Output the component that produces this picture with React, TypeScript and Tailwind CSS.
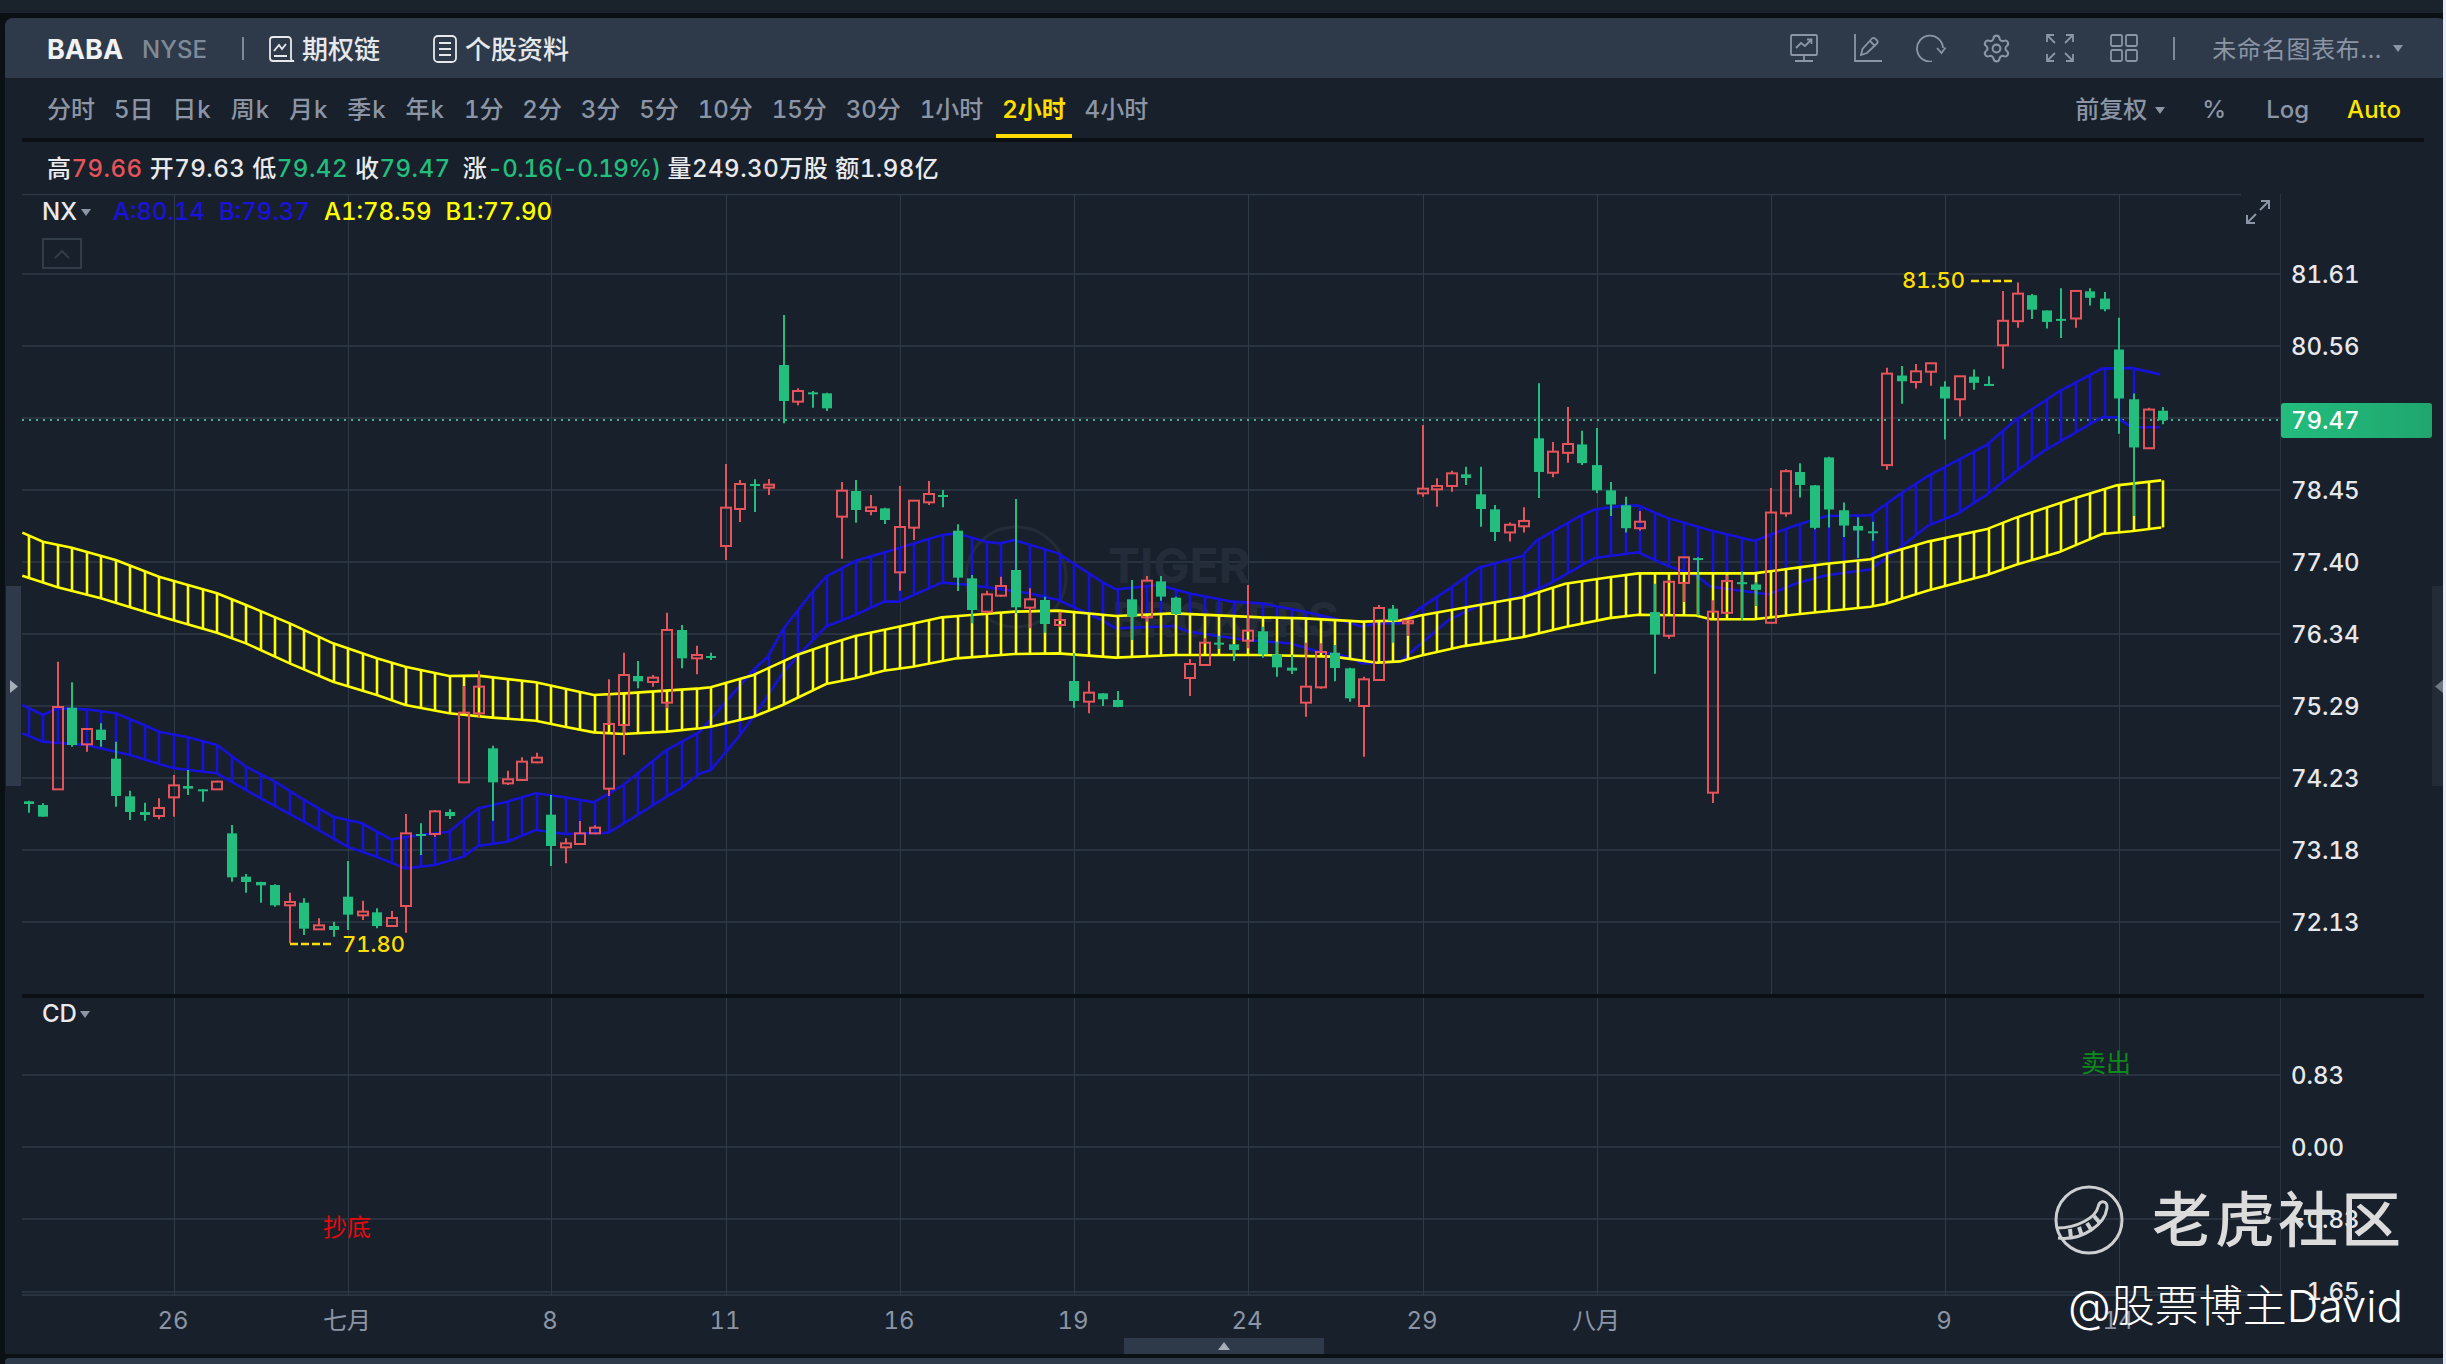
import React from "react";
import { Settings } from "lucide-react";

const RED = "#e5545a";
const GREEN = "#23bd7e";
const BLUE = "#1712d8";
const YELLOW = "#ffff00";
const GRID = "#2f3a47";

const R = 1;
const G = 0;
type Row = number[];

// candle rows: colour, high, body top, body bottom, low (read off the chart, per section)
const sectionA: Row[] = [
  [G, 962, 964, 972, 998], [G, 970, 975, 1010, 1010], [R, 545, 681, 928, 928], [G, 607, 683, 795, 800],
  [R, 745, 747, 793, 815], [G, 730, 749, 780, 800], [G, 785, 836, 948, 980], [G, 932, 949, 996, 1020],
  [G, 968, 996, 1005, 1022], [R, 955, 984, 1008, 1018], [R, 885, 916, 952, 1010], [G, 870, 918, 926, 945],
  [G, 928, 928, 933, 965], [R, 902, 905, 928, 930], [G, 1035, 1060, 1192, 1205], [G, 1182, 1190, 1206, 1238],
  [G, 1205, 1206, 1216, 1268], [G, 1213, 1215, 1276, 1280], [R, 1238, 1266, 1276, 1390], [G, 1255, 1268, 1346, 1365],
  [R, 1315, 1336, 1348, 1350], [G, 1325, 1338, 1350, 1370], [G, 1143, 1250, 1304, 1350], [R, 1262, 1295, 1306, 1320],
  [G, 1285, 1297, 1338, 1345], [R, 1293, 1314, 1338, 1340], [R, 1002, 1060, 1278, 1358], [G, 1030, 1062, 1068, 1125],
  [R, 990, 994, 1062, 1070], [G, 988, 996, 1008, 1017], [R, 618, 698, 907, 907], [R, 572, 620, 700, 712],
  [G, 797, 805, 907, 1022], [R, 872, 898, 910, 915], [R, 832, 845, 900, 902], [R, 818, 833, 847, 850],
  [G, 945, 1004, 1098, 1158], [R, 1075, 1090, 1102, 1150], [R, 1023, 1060, 1092, 1095], [R, 1036, 1043, 1060, 1063],
  [R, 598, 732, 926, 948], [R, 518, 585, 735, 825], [G, 543, 588, 604, 625], [R, 585, 593, 606, 620],
  [R, 398, 450, 668, 685], [G, 435, 450, 535, 565], [R, 497, 525, 535, 583],
];

const sectionB: Row[] = [
  [G, 1118, 1128, 1132, 1140], [R, 552, 683, 798, 840], [R, 600, 612, 687, 726], [G, 598, 612, 618, 696],
  [R, 597, 614, 623, 645], [G, 105, 255, 363, 430], [R, 325, 333, 365, 376], [G, 333, 337, 340, 383],
  [G, 338, 340, 385, 393], [R, 606, 632, 710, 836], [G, 600, 633, 690, 728], [R, 645, 682, 693, 706],
  [G, 683, 685, 720, 732], [R, 618, 741, 877, 932], [R, 660, 662, 743, 780], [R, 603, 642, 667, 675],
  [G, 630, 645, 650, 682], [G, 733, 752, 893, 933], [G, 885, 895, 990, 1030], [R, 932, 943, 995, 1000],
  [R, 890, 918, 947, 950], [G, 657, 870, 982, 1000], [R, 925, 958, 983, 1045], [G, 950, 960, 1032, 1058],
  [R, 995, 1020, 1035, 1042], [G, 1120, 1203, 1263, 1283], [R, 1204, 1238, 1265, 1300], [G, 1240, 1240, 1258, 1278],
  [G, 1233, 1260, 1281, 1282], [G, 900, 958, 1010, 1080], [R, 888, 902, 1012, 1025], [G, 888, 904, 950, 962],
  [G, 950, 953, 1002, 1005], [R, 1137, 1152, 1194, 1248], [R, 1075, 1088, 1155, 1158], [G, 1067, 1088, 1094, 1107],
  [G, 1092, 1093, 1110, 1143], [R, 915, 1052, 1082, 1105], [G, 1040, 1054, 1123, 1133], [G, 1085, 1123, 1162, 1190],
  [G, 1125, 1163, 1172, 1182], [R, 1088, 1220, 1268, 1310], [R, 1090, 1116, 1222, 1226], [G, 1095, 1118, 1164, 1204],
  [G, 1163, 1165, 1255, 1265], [R, 1190, 1198, 1278, 1430], [R, 975, 984, 1200, 1202], [G, 975, 986, 1022, 1088],
  [R, 1020, 1022, 1030, 1068], [R, 435, 626, 640, 650], [R, 595, 618, 628, 680], [R, 572, 580, 618, 635],
  [G, 560, 583, 594, 615], [G, 560, 643, 687, 740], [G, 675, 688, 756, 783],
];

const sectionC: Row[] = [
  [R, 712, 718, 738, 762], [R, 672, 708, 722, 738], [G, 348, 492, 580, 648], [R, 502, 527, 582, 594],
  [R, 410, 507, 530, 556], [G, 472, 508, 557, 562], [G, 465, 562, 628, 635], [G, 606, 628, 665, 695],
  [G, 645, 667, 727, 738], [R, 682, 710, 727, 733], [G, 872, 946, 1005, 1107], [R, 862, 867, 1008, 1016],
  [R, 803, 803, 870, 920], [G, 803, 805, 809, 955], [R, 915, 945, 1418, 1445], [R, 850, 865, 948, 952],
  [G, 840, 868, 873, 968], [G, 868, 874, 888, 930], [R, 622, 686, 974, 976], [R, 573, 578, 688, 697],
  [G, 557, 580, 614, 647], [G, 614, 615, 726, 730], [G, 540, 542, 678, 725], [G, 660, 680, 720, 750],
  [G, 698, 721, 733, 805], [G, 710, 735, 738, 760], [R, 308, 323, 562, 574], [G, 303, 328, 343, 402],
  [R, 298, 317, 345, 362], [R, 295, 296, 318, 355], [G, 343, 357, 388, 495], [R, 330, 330, 390, 435],
  [G, 312, 331, 347, 365], [G, 330, 350, 352, 355], [R, 107, 185, 249, 310], [R, 85, 114, 186, 203],
  [G, 115, 118, 156, 180], [G, 158, 158, 188, 205], [G, 100, 180, 182, 230], [R, 107, 107, 179, 203],
  [G, 100, 108, 125, 145], [G, 110, 127, 155, 160], [G, 177, 260, 388, 480], [G, 375, 390, 516, 695],
  [R, 412, 417, 518, 520], [G, 410, 420, 445, 455],
];

const toY = (rows: Row[], base: number, k: number) =>
  rows.map(([c, ...v]) => [c, ...v.map((n) => base + n / k)]);

const candles = [...toY(sectionA, 480, 3), ...toY(sectionB, 280, 3), ...toY(sectionC, 250, 2.613)];

const slotX = (i: number) => Math.round(28.6 + 14.52 * i);

type Pt = number[];
const makeCurve = (a: Pt[], b: Pt[], c: Pt[]) => [
  ...a.map(([x, y]) => [x / 2.24, 480 + y / 3]),
  ...b.map(([x, y]) => [700 + x / 1.96, 280 + y / 3]).filter((p) => p[0] > 700 && p[0] < 1400),
  ...c.map(([x, y]) => [1400 + x / 1.96, 250 + y / 2.613]),
];

const yellowTop = makeCurve(
  [[50, 158], [96, 185], [161, 203], [259, 240], [356, 290], [486, 340], [551, 375], [649, 430], [746, 490], [844, 535], [908, 560], [1006, 588], [1071, 587], [1200, 607], [1330, 645], [1400, 640], [1568, 625]],
  [[21, 1222], [105, 1185], [133, 1165], [190, 1125], [247, 1095], [304, 1068], [389, 1040], [474, 1012], [531, 1005], [616, 995], [702, 992], [815, 1008], [929, 1000], [1100, 1012], [1185, 1015], [1298, 1025]],
  [[0, 968], [40, 955], [125, 935], [239, 908], [324, 872], [410, 855], [467, 845], [580, 845], [694, 845], [779, 830], [836, 820], [922, 808], [950, 795], [1035, 762], [1149, 730], [1206, 700], [1319, 650], [1405, 615], [1492, 602]]
);

const yellowBottom = makeCurve(
  [[50, 287], [129, 322], [226, 355], [356, 408], [486, 458], [551, 490], [649, 550], [746, 605], [844, 645], [908, 675], [1006, 700], [1103, 713], [1200, 722], [1265, 740], [1330, 757], [1396, 762], [1493, 755], [1568, 745]],
  [[21, 1340], [105, 1310], [162, 1275], [247, 1212], [304, 1195], [360, 1172], [417, 1160], [503, 1135], [616, 1122], [702, 1120], [815, 1133], [929, 1125], [1100, 1125], [1242, 1130], [1327, 1148]],
  [[0, 1075], [40, 1060], [125, 1035], [239, 1012], [324, 985], [410, 962], [467, 953], [580, 955], [609, 965], [694, 965], [779, 952], [922, 932], [950, 925], [1035, 890], [1149, 850], [1206, 823], [1291, 790], [1376, 742], [1433, 735], [1492, 725]]
);

const blueTop = makeCurve(
  [[50, 675], [96, 705], [129, 685], [193, 688], [259, 700], [323, 735], [356, 755], [421, 772], [486, 795], [551, 860], [616, 905], [681, 960], [746, 1010], [811, 1030], [876, 1078], [941, 1065], [1006, 1055], [1071, 985], [1136, 965], [1200, 940], [1265, 952], [1330, 967], [1396, 915], [1493, 810], [1568, 755]],
  [[105, 1170], [133, 1130], [162, 1050], [190, 995], [218, 940], [247, 890], [304, 843], [389, 805], [474, 765], [503, 760], [560, 785], [588, 790], [616, 780], [702, 820], [787, 905], [815, 928], [900, 915], [958, 940], [1043, 965], [1100, 970], [1185, 995], [1242, 1015], [1298, 1040], [1327, 1030]],
  [[0, 975], [40, 935], [97, 885], [154, 830], [239, 800], [267, 760], [353, 695], [381, 678], [438, 668], [467, 668], [524, 700], [609, 733], [694, 760], [779, 718], [836, 695], [922, 693], [978, 640], [1035, 590], [1149, 510], [1206, 445], [1291, 370], [1376, 310], [1433, 308], [1490, 325]]
);

const blueBottom = makeCurve(
  [[50, 760], [96, 785], [193, 795], [291, 825], [389, 865], [486, 880], [584, 955], [681, 1025], [778, 1100], [843, 1130], [908, 1165], [973, 1155], [1038, 1130], [1071, 1098], [1136, 1085], [1200, 1050], [1265, 1062], [1363, 1058], [1428, 1005], [1493, 950], [1525, 925], [1568, 880]],
  [[21, 1470], [76, 1370], [105, 1310], [162, 1180], [190, 1130], [247, 1040], [304, 1005], [361, 965], [389, 965], [474, 908], [531, 915], [645, 940], [702, 960], [787, 1020], [815, 1045], [929, 1038], [958, 1055], [1071, 1080], [1156, 1090], [1213, 1115], [1270, 1130], [1298, 1150]],
  [[0, 1075], [40, 1030], [97, 965], [154, 930], [239, 905], [296, 870], [381, 805], [467, 790], [524, 825], [580, 850], [609, 880], [694, 895], [723, 900], [779, 870], [836, 850], [922, 835], [978, 780], [1035, 720], [1092, 690], [1149, 640], [1206, 580], [1262, 525], [1376, 437], [1405, 437], [1433, 463], [1490, 463]]
);

const yAt = (curve: number[][], x: number) => {
  for (let i = 1; i < curve.length; i++) {
    if (x <= curve[i][0]) {
      const [x0, y0] = curve[i - 1];
      const [x1, y1] = curve[i];
      return y0 + ((y1 - y0) * (x - x0)) / (x1 - x0 || 1);
    }
  }
  return curve[curve.length - 1][1];
};

const points = (curve: number[][]) => curve.map((p) => p.join(",")).join(" ");

const gridSlots = [10, 22, 36, 48, 60, 72, 84, 96, 108, 120, 132, 144];
const priceRows = [274, 346, 418, 490, 562, 634, 706, 778, 850, 922];

const Band = ({ top, bottom, color, last }: { top: number[][]; bottom: number[][]; color: string; last: number }) => (
  <g stroke={color} strokeWidth={2.6} fill="none">
    <polyline points={points(top)} />
    <polyline points={points(bottom)} />
    {Array.from({ length: last + 1 }, (_, i) => (
      <line key={i} x1={slotX(i)} x2={slotX(i)} y1={yAt(top, slotX(i))} y2={yAt(bottom, slotX(i))} />
    ))}
  </g>
);

const Candle = ({ row, i }: { row: number[]; i: number }) => {
  const [c, hi, top, bot, lo] = row;
  const x = slotX(i);
  if (c === G) {
    return (
      <g>
        <line x1={x} x2={x} y1={hi} y2={lo} stroke={GREEN} strokeWidth={2} />
        <rect x={x - 5} y={top} width={10} height={Math.max(bot - top, 2)} fill={GREEN} />
      </g>
    );
  }
  return (
    <g stroke={RED}>
      <line x1={x} x2={x} y1={hi} y2={top} strokeWidth={2} />
      <line x1={x} x2={x} y1={bot} y2={lo} strokeWidth={2} />
      <rect x={x - 5} y={top} width={10} height={bot - top} fill="none" strokeWidth={2} />
    </g>
  );
};

const Caret = ({ className = "" }: { className?: string }) => (
  <svg width="10" height="7" viewBox="0 0 10 7" className={className}>
    <polygon points="0,0 10,0 5,7" fill="#8b95a5" />
  </svg>
);

const PriceChart = () => (
  <svg width="2275" height="800" viewBox="5 194 2275 800" className="block">
    <line x1="22" x2="2241" y1="194.5" y2="194.5" stroke={GRID} strokeWidth="1.5" />
    {priceRows.map((y) => (
      <line key={y} x1="22" x2="2280" y1={y} y2={y} stroke={GRID} strokeWidth="1.5" />
    ))}
    {gridSlots.map((s) => (
      <line key={s} x1={slotX(s) + 0.5} x2={slotX(s) + 0.5} y1="194" y2="994" stroke={GRID} />
    ))}
    <text x="1108" y="583" fontSize="48" fontWeight="700" fill="#232c38">TIGER</text>
    <text x="1112" y="637" fontSize="48" fontWeight="700" fill="#232c38">BROKERS</text>
    <circle cx="1016" cy="577" r="50" fill="none" stroke="#232c38" strokeWidth="3" />
    <line x1="22" x2="2280" y1="420" y2="420" stroke="#45b08f" strokeWidth="2" strokeDasharray="2 5" />
    <Band top={blueTop} bottom={blueBottom} color={BLUE} last={145} />
    <Band top={yellowTop} bottom={yellowBottom} color={YELLOW} last={147} />
    {candles.map((row, i) => (
      <Candle key={i} row={row} i={i} />
    ))}
    <line x1="1971" x2="2014" y1="281" y2="281" stroke="#ffdd00" strokeWidth="2.5" strokeDasharray="8 3" />
    <text x="1902" y="288" fontSize="22" fontWeight="500" fill="#ffdd00">81.50</text>
    <line x1="290" x2="334" y1="944" y2="944" stroke="#ffdd00" strokeWidth="2.5" strokeDasharray="8 3" />
    <text x="342" y="952" fontSize="22" fontWeight="500" fill="#ffdd00">71.80</text>
  </svg>
);

const axisDates: [number, string][] = [
  [10, "26"], [22, "七月"], [36, "8"], [48, "11"], [60, "16"], [72, "19"], [84, "24"], [96, "29"], [108, "八月"], [132, "9"], [144, "14"],
];

const IndicatorChart = () => (
  <svg width="2275" height="356" viewBox="5 998 2275 356" className="block">
    {[1075, 1147, 1219, 1292, 1295].map((y) => (
      <line key={y} x1="22" x2="2280" y1={y} y2={y} stroke={GRID} strokeWidth="1.5" />
    ))}
    {gridSlots.filter((s) => s !== 120).map((s) => (
      <line key={s} x1={slotX(s) + 0.5} x2={slotX(s) + 0.5} y1="998" y2="1296" stroke={GRID} />
    ))}
    <text x="347" y="1236" fontSize="24" fill="#e30b0b" textAnchor="middle">抄底</text>
    <text x="2106" y="1072" fontSize="25" fill="#0c8a1c" textAnchor="middle">卖出</text>
    {axisDates.map(([s, label]) => (
      <text key={s} x={slotX(s) - 1} y="1329" fontSize="24" fill="#8b95a5" textAnchor="middle">{label}</text>
    ))}
  </svg>
);

const toolIcon = "w-[28px] h-[28px] text-[#8b95a5]";

const HeaderTools = () => (
  <div className="flex items-center gap-[36px]">
    <svg viewBox="0 0 28 28" className={toolIcon} fill="none" stroke="currentColor" strokeWidth="1.8">
      <rect x="1" y="1" width="26" height="20" rx="1" />
      <path d="M6 14l5-5 4 3 6-6M17 5.500h4.500V10M14 21v6M5 27h18" />
    </svg>
    <svg viewBox="0 0 28 28" className={toolIcon} fill="none" stroke="currentColor" strokeWidth="1.8">
      <path d="M1 0v27h27" />
      <path d="M7 21l1.500-6L18 4.500a2 2 0 0 1 3 0l2 2a2 2 0 0 1 0 3L13 19z" />
      <path d="M16 7l5 5" />
    </svg>
    <div className="w-[28px] h-[28px] flex items-center justify-center">
      <svg viewBox="0 0 32 28" className="shrink-0 w-[32px] h-[28px] text-[#8b95a5]" fill="none" stroke="currentColor" strokeWidth="1.8">
        <path d="M27 14A13 13 0 1 0 16 27.500" />
        <path d="M21 14l4.500 5 4-5.500" />
      </svg>
    </div>
    <div className="w-[28px] h-[28px] flex items-center justify-center">
      <Settings className="shrink-0 w-[31px] h-[31px] text-[#8b95a5]" strokeWidth={1.6} />
    </div>
    <svg viewBox="0 0 28 28" className={toolIcon} fill="none" stroke="currentColor" strokeWidth="1.8">
      <path d="M1 8V1h7M1 1l8 8M27 8V1h-7M27 1l-8 8M1 20v7h7M1 27l8-8M27 20v7h-7M27 27l-8-8" />
    </svg>
    <svg viewBox="0 0 28 28" className={toolIcon} fill="none" stroke="currentColor" strokeWidth="1.8">
      <rect x="1" y="1" width="11" height="11" rx="1.500" />
      <rect x="16" y="1" width="11" height="11" rx="1.500" />
      <rect x="1" y="16" width="11" height="11" rx="1.500" />
      <rect x="16" y="16" width="11" height="11" rx="1.500" />
    </svg>
  </div>
);

const Header = () => (
  <div className="h-[60px] rounded-t-lg bg-[#2e3a4a] flex items-center pl-[42px] pr-[43px] text-[26px] leading-none">
    <span className="mt-[3px] font-bold text-[#f1f2f4] text-[27px]">BABA</span>
    <span className="mt-[3px] ml-[19px] text-[24px] font-medium text-[#7f8a99]">NYSE</span>
    <span className="ml-[35px] w-[2px] h-[23px] bg-[#7f8a99]" />
    <svg width="26" height="26" viewBox="0 0 26 26" fill="none" stroke="#e6e8eb" strokeWidth="1.800" className="mt-[2px] ml-[25px]">
      <path d="M22 23V4a3 3 0 0 0-3-3H4a3 3 0 0 0-3 3v18a3 3 0 0 0 3 3h21a2.500 2.500 0 0 1-3-2" />
      <path d="M5 15l5-6 3 4 4-5M5 20h13" />
    </svg>
    <span className="mt-[3px] ml-[7px] text-[#e6e8eb] font-medium">期权链</span>
    <svg width="24" height="28" viewBox="0 0 24 28" fill="none" stroke="#e6e8eb" strokeWidth="1.800" className="mt-[2px] ml-[53px]">
      <rect x="1" y="1" width="22" height="26" rx="4" />
      <path d="M6 8h12M6 14h12M6 20h12" />
    </svg>
    <span className="mt-[3px] ml-[8px] text-[#e6e8eb] font-medium">个股资料</span>
    <div className="ml-auto flex items-center">
      <HeaderTools />
      <span className="ml-[35px] w-[2px] h-[23px] bg-[#7f8a99]" />
      <span className="mt-[3px] ml-[37px] text-[24px] tracking-[0.7px] text-[#8b95a5]">未命名图表布...</span>
      <Caret className="ml-[11px]" />
    </div>
  </div>
);

const periods = ["分时", "5日", "日k", "周k", "月k", "季k", "年k", "1分", "2分", "3分", "5分", "10分", "15分", "30分", "1小时", "2小时", "4小时"];

const Toolbar = () => (
  <div className="h-[60px] flex items-stretch justify-between pl-[42px] pr-[45px] text-[24px] font-medium leading-none text-[#8b95a5]">
    <div className="flex gap-[18.900px]">
      {periods.map((p) =>
        p === "2小时" ? (
          <span key={p} className="flex items-center -mx-[6px] px-[6px] pt-[8px] border-b-4 border-[#ffdd00] text-[#ffdd00] font-semibold">
            {p}
          </span>
        ) : (
          <span key={p} className={p.endsWith("k") ? "flex items-center pt-[4px] tracking-[1px]" : "flex items-center pt-[4px]"}>
            {p}
          </span>
        )
      )}
    </div>
    <div className="flex items-center pt-[4px]">
      <span>前复权</span>
      <Caret className="ml-[8px]" />
      <span className="ml-[37px]">%</span>
      <span className="ml-[40px]">Log</span>
      <span className="ml-[38px] text-[#ffe600]">Auto</span>
    </div>
  </div>
);

const InfoLine = () => (
  <div className="h-[52px] flex items-center gap-[7px] pl-[42px] pt-[2px] text-[24px] font-medium leading-none tracking-[0.5px] text-[#e8eaed]">
    <span>高<span className="text-[#e5545a]">79.66</span></span>
    <span>开79.63</span>
    <span>低<span className="text-[#23bd7e]">79.42</span></span>
    <span>收<span className="text-[#23bd7e]">79.47</span></span>
    <span className="ml-[5px]">涨<span className="text-[#23bd7e] tracking-[-0.5px]">-0.16(-0.19%)</span></span>
    <span>量249.30万股</span>
    <span>额1.98亿</span>
  </div>
);

const PriceAxis = () => (
  <div className="w-[152px] h-[800px] border-l border-[#2a3441] pt-[45px] text-[24px] font-medium leading-none text-[#e6e8eb]">
    {["81.61", "80.56", "79.47", "78.45", "77.40", "76.34", "75.29", "74.23", "73.18", "72.13"].map((v) =>
      v === "79.47" ? (
        <div key={v} className="h-[72px] flex items-center pt-[3px]">
          <div className="w-full h-[35px] rounded-[3px] bg-gradient-to-r from-[#23bd7e] to-[#1fa66e] flex items-center pl-[10px] text-white">
            {v}
          </div>
        </div>
      ) : (
        <div key={v} className="h-[72px] flex items-center pl-[10px]">
          {v}
        </div>
      )
    )}
  </div>
);

const SubAxis = () => (
  <div className="w-[152px] h-[298px] border-l border-[#2a3441] pt-[42px] text-[24px] font-medium leading-none text-[#e6e8eb]">
    {["0.83", "0.00", "-0.83", "-1.65"].map((v) => (
      <div key={v} className="h-[72px] flex items-center pl-[10px]">
        {v}
      </div>
    ))}
  </div>
);

const ChartOverlay = () => (
  <>
    <div className="absolute left-[37px] top-[6px] h-[24px] flex items-center text-[24px] font-medium leading-none text-[#e8eaed]">
      <span>NX</span>
      <Caret className="ml-[4px] mr-[22px]" />
      <span className="text-[#1a12dc] mr-[14px]">A:80.14</span>
      <span className="text-[#1a12dc] mr-[14px]">B:79.37</span>
      <span className="text-[#ffff00] mr-[14px]">A1:78.59</span>
      <span className="text-[#ffff00]">B1:77.90</span>
    </div>
    <div className="absolute left-[37px] top-[44px] w-[40px] h-[31px] border-2 border-[#333d4a] flex items-center justify-center">
      <svg width="16" height="10" viewBox="0 0 16 10" fill="none" stroke="#333d4a" strokeWidth="2">
        <path d="M1 9l7-7 7 7" />
      </svg>
    </div>
    <svg width="26" height="26" viewBox="0 0 26 26" fill="none" stroke="#8b95a5" strokeWidth="2" className="absolute left-[2240px] top-[5px]">
      <path d="M16 2h8v8M24 2L15 11M2 16v8h8M2 24l9-9" />
    </svg>
    <div className="absolute left-[1px] top-[392px] w-[15px] h-[200px] bg-[#2e3a4a] flex items-center justify-center">
      <svg width="8" height="13" viewBox="0 0 8 13">
        <polygon points="0,0 8,6.500 0,13" fill="#a6aeb9" />
      </svg>
    </div>
  </>
);

const Watermark = () => (
  <div className="absolute left-[2054px] top-[1185px] w-[350px] h-[150px] pointer-events-none">
    <div className="flex items-center">
      <svg width="70" height="70" viewBox="0 0 70 70" fill="none" stroke="#cdcfd1" strokeWidth="3">
        <circle cx="35" cy="35" r="33" />
        <path d="M44 22c2-8 10-6 9 1-2 16-24 33-49 30" />
        <path d="M44 22c-2 10-20 21-41 21" />
        <path d="M40 31l6 7M33 38l5 8M25 42l3 9M16 44l1 9" strokeWidth="4" />
      </svg>
      <span className="ml-[28px] text-[60px] leading-none font-medium tracking-[3px] text-[#dcdcdc]">老虎社区</span>
    </div>
    <div className="mt-[29px] ml-[14px] text-[44px] leading-none font-light whitespace-nowrap text-white">@股票博主David</div>
  </div>
);

export default function App() {
  return (
    <div className="relative w-[2446px] h-[1364px] overflow-hidden bg-[#0b1015] text-left tabular-nums [font-family:Inter,'Noto_Sans_CJK_SC',sans-serif]">
      <div className="h-[13px] bg-[#1a222c]" />
      <div className="h-[5px]" />
      <div className="ml-[5px] h-[1336px] rounded-t-lg bg-[#18202b] flex flex-col">
        <Header />
        <Toolbar />
        <div className="h-[4px] ml-[17px] mr-[22px] bg-[#0b1015]" />
        <InfoLine />
        <div className="flex">
          <div className="relative w-[2275px] h-[800px]">
            <PriceChart />
            <ChartOverlay />
          </div>
          <PriceAxis />
          <div className="w-[14px] h-[800px] pt-[392px]">
            <div className="h-[200px] bg-[#232b37] flex items-center justify-center">
              <svg width="8" height="13" viewBox="0 0 8 13">
                <polygon points="8,0 0,6.500 8,13" fill="#6d7785" />
              </svg>
            </div>
          </div>
        </div>
        <div className="h-[4px] ml-[17px] mr-[22px] bg-[#0b1015]" />
        <div className="flex">
          <div className="relative w-[2275px] h-[356px]">
            <IndicatorChart />
            <div className="absolute left-[37px] top-[4px] h-[24px] flex items-center text-[24px] font-medium leading-none text-[#e8eaed]">
              <span>CD</span>
              <Caret className="ml-[3px]" />
            </div>
            <div className="absolute left-[1119px] bottom-0 w-[200px] h-[16px] bg-[#2e3a4a] flex items-center justify-center">
              <svg width="12" height="8" viewBox="0 0 12 8">
                <polygon points="0,8 12,8 6,0" fill="#a6aeb9" />
              </svg>
            </div>
          </div>
          <SubAxis />
        </div>
      </div>
      <div className="h-[4px]" />
      <div className="h-[6px] ml-[5px] rounded-t bg-[#2e3a4a]" />
      <Watermark />
      <div className="absolute right-0 top-0 w-[3px] h-full bg-[#e9ecf4]" />
    </div>
  );
}
